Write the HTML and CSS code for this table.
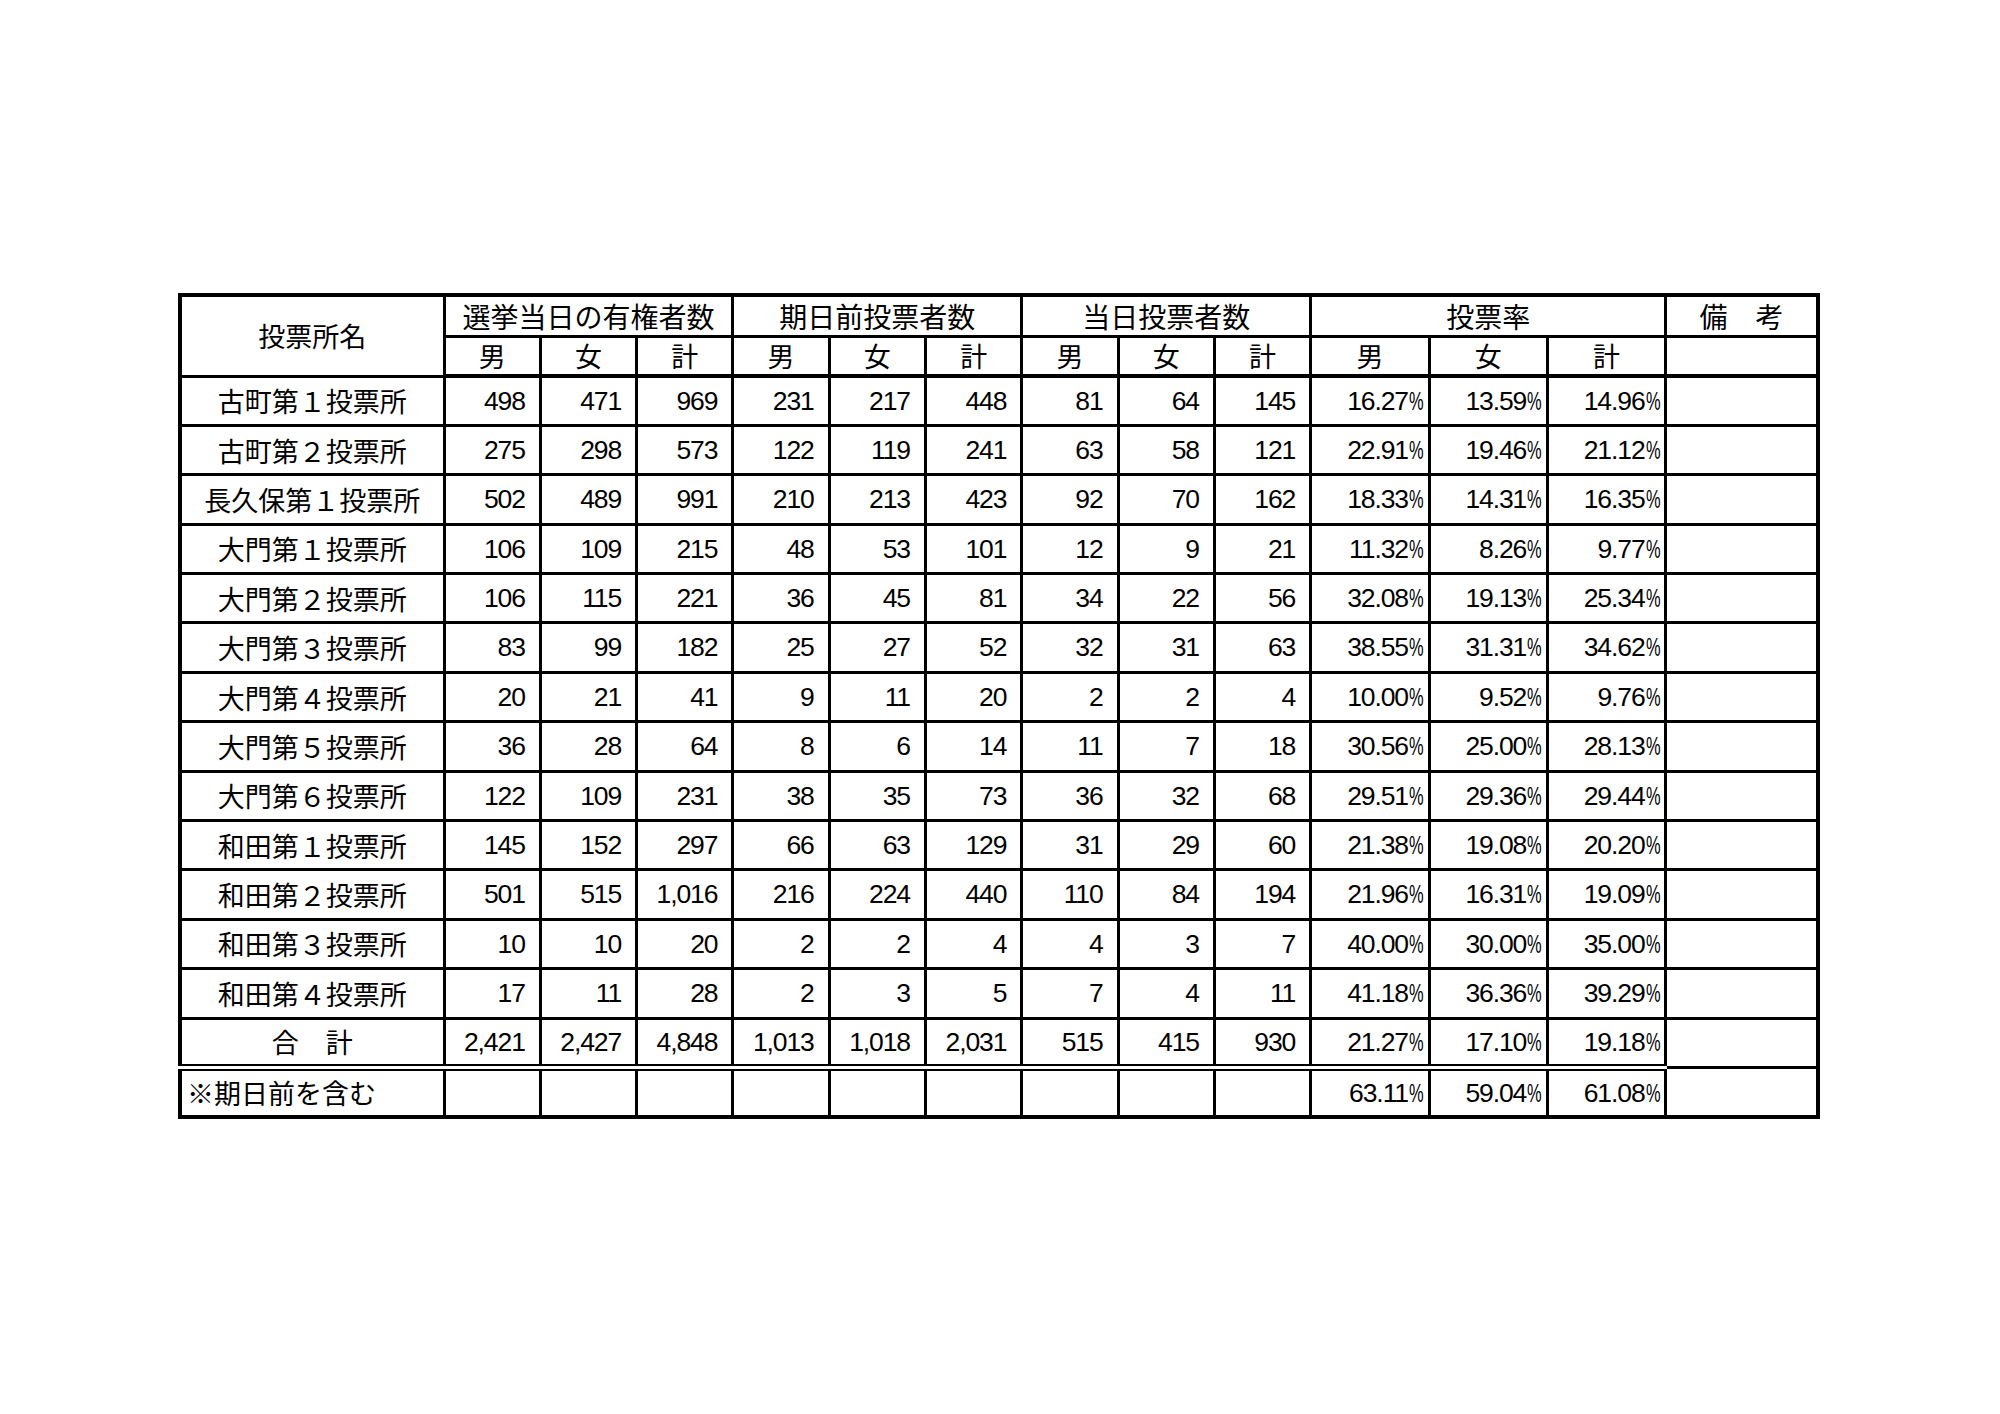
FILE: index.html
```html
<!DOCTYPE html>
<html lang="ja">
<head>
<meta charset="utf-8">
<title>投票率</title>
<link rel="stylesheet" href="styles.css">
</head>
<body>
<div class="page">
<table class="vote">
  <colgroup>
    <col class="c-name">
    <col class="c-num"><col class="c-num"><col class="c-num">
    <col class="c-num"><col class="c-num"><col class="c-num">
    <col class="c-num"><col class="c-num"><col class="c-num">
    <col class="c-rate"><col class="c-rate"><col class="c-rate">
    <col class="c-note">
  </colgroup>
  <thead>
    <tr class="h1">
      <th rowspan="2" class="hname">投票所名</th>
      <th colspan="3" class="grp">選挙当日の有権者数</th>
      <th colspan="3" class="grp">期日前投票者数</th>
      <th colspan="3" class="grp">当日投票者数</th>
      <th colspan="3" class="grp">投票率</th>
      <th class="grp">備　考</th>
    </tr>
    <tr class="h2">
      <th>男</th><th>女</th><th>計</th>
      <th>男</th><th>女</th><th>計</th>
      <th>男</th><th>女</th><th>計</th>
      <th>男</th><th>女</th><th>計</th>
      <th></th>
    </tr>
  </thead>
  <tbody>
    <tr><td class="name">古町第１投票所</td><td class="n">498</td><td class="n">471</td><td class="n">969</td><td class="n">231</td><td class="n">217</td><td class="n">448</td><td class="n">81</td><td class="n">64</td><td class="n">145</td><td class="p">16.27<span class="pc">%</span></td><td class="p">13.59<span class="pc">%</span></td><td class="p">14.96<span class="pc">%</span></td><td></td></tr>
    <tr><td class="name">古町第２投票所</td><td class="n">275</td><td class="n">298</td><td class="n">573</td><td class="n">122</td><td class="n">119</td><td class="n">241</td><td class="n">63</td><td class="n">58</td><td class="n">121</td><td class="p">22.91<span class="pc">%</span></td><td class="p">19.46<span class="pc">%</span></td><td class="p">21.12<span class="pc">%</span></td><td></td></tr>
    <tr><td class="name">長久保第１投票所</td><td class="n">502</td><td class="n">489</td><td class="n">991</td><td class="n">210</td><td class="n">213</td><td class="n">423</td><td class="n">92</td><td class="n">70</td><td class="n">162</td><td class="p">18.33<span class="pc">%</span></td><td class="p">14.31<span class="pc">%</span></td><td class="p">16.35<span class="pc">%</span></td><td></td></tr>
    <tr><td class="name">大門第１投票所</td><td class="n">106</td><td class="n">109</td><td class="n">215</td><td class="n">48</td><td class="n">53</td><td class="n">101</td><td class="n">12</td><td class="n">9</td><td class="n">21</td><td class="p">11.32<span class="pc">%</span></td><td class="p">8.26<span class="pc">%</span></td><td class="p">9.77<span class="pc">%</span></td><td></td></tr>
    <tr><td class="name">大門第２投票所</td><td class="n">106</td><td class="n">115</td><td class="n">221</td><td class="n">36</td><td class="n">45</td><td class="n">81</td><td class="n">34</td><td class="n">22</td><td class="n">56</td><td class="p">32.08<span class="pc">%</span></td><td class="p">19.13<span class="pc">%</span></td><td class="p">25.34<span class="pc">%</span></td><td></td></tr>
    <tr><td class="name">大門第３投票所</td><td class="n">83</td><td class="n">99</td><td class="n">182</td><td class="n">25</td><td class="n">27</td><td class="n">52</td><td class="n">32</td><td class="n">31</td><td class="n">63</td><td class="p">38.55<span class="pc">%</span></td><td class="p">31.31<span class="pc">%</span></td><td class="p">34.62<span class="pc">%</span></td><td></td></tr>
    <tr><td class="name">大門第４投票所</td><td class="n">20</td><td class="n">21</td><td class="n">41</td><td class="n">9</td><td class="n">11</td><td class="n">20</td><td class="n">2</td><td class="n">2</td><td class="n">4</td><td class="p">10.00<span class="pc">%</span></td><td class="p">9.52<span class="pc">%</span></td><td class="p">9.76<span class="pc">%</span></td><td></td></tr>
    <tr><td class="name">大門第５投票所</td><td class="n">36</td><td class="n">28</td><td class="n">64</td><td class="n">8</td><td class="n">6</td><td class="n">14</td><td class="n">11</td><td class="n">7</td><td class="n">18</td><td class="p">30.56<span class="pc">%</span></td><td class="p">25.00<span class="pc">%</span></td><td class="p">28.13<span class="pc">%</span></td><td></td></tr>
    <tr><td class="name">大門第６投票所</td><td class="n">122</td><td class="n">109</td><td class="n">231</td><td class="n">38</td><td class="n">35</td><td class="n">73</td><td class="n">36</td><td class="n">32</td><td class="n">68</td><td class="p">29.51<span class="pc">%</span></td><td class="p">29.36<span class="pc">%</span></td><td class="p">29.44<span class="pc">%</span></td><td></td></tr>
    <tr><td class="name">和田第１投票所</td><td class="n">145</td><td class="n">152</td><td class="n">297</td><td class="n">66</td><td class="n">63</td><td class="n">129</td><td class="n">31</td><td class="n">29</td><td class="n">60</td><td class="p">21.38<span class="pc">%</span></td><td class="p">19.08<span class="pc">%</span></td><td class="p">20.20<span class="pc">%</span></td><td></td></tr>
    <tr><td class="name">和田第２投票所</td><td class="n">501</td><td class="n">515</td><td class="n">1,016</td><td class="n">216</td><td class="n">224</td><td class="n">440</td><td class="n">110</td><td class="n">84</td><td class="n">194</td><td class="p">21.96<span class="pc">%</span></td><td class="p">16.31<span class="pc">%</span></td><td class="p">19.09<span class="pc">%</span></td><td></td></tr>
    <tr><td class="name">和田第３投票所</td><td class="n">10</td><td class="n">10</td><td class="n">20</td><td class="n">2</td><td class="n">2</td><td class="n">4</td><td class="n">4</td><td class="n">3</td><td class="n">7</td><td class="p">40.00<span class="pc">%</span></td><td class="p">30.00<span class="pc">%</span></td><td class="p">35.00<span class="pc">%</span></td><td></td></tr>
    <tr><td class="name">和田第４投票所</td><td class="n">17</td><td class="n">11</td><td class="n">28</td><td class="n">2</td><td class="n">3</td><td class="n">5</td><td class="n">7</td><td class="n">4</td><td class="n">11</td><td class="p">41.18<span class="pc">%</span></td><td class="p">36.36<span class="pc">%</span></td><td class="p">39.29<span class="pc">%</span></td><td></td></tr>
    <tr class="total"><td class="name">合　計</td><td class="n">2,421</td><td class="n">2,427</td><td class="n">4,848</td><td class="n">1,013</td><td class="n">1,018</td><td class="n">2,031</td><td class="n">515</td><td class="n">415</td><td class="n">930</td><td class="p">21.27<span class="pc">%</span></td><td class="p">17.10<span class="pc">%</span></td><td class="p">19.18<span class="pc">%</span></td><td class="last"></td></tr>
    <tr class="extra"><td class="note">※期日前を含む</td><td></td><td></td><td></td><td></td><td></td><td></td><td></td><td></td><td></td><td class="p">63.11<span class="pc">%</span></td><td class="p">59.04<span class="pc">%</span></td><td class="p">61.08<span class="pc">%</span></td><td></td></tr>
  </tbody>
</table>
</div>
</body>
</html>
```

FILE: styles.css
```css
html, body {
  margin: 0;
  padding: 0;
  background: #ffffff;
}

body {
  width: 2000px;
  height: 1414px;
  color: #000;
  font-family: "Noto Sans CJK JP", "Noto Sans CJK SC", sans-serif;
}

.page {
  padding: 293px 0 0 178px;
}

.vote {
  border-collapse: collapse;
  table-layout: fixed;
  width: 1640px;
  border: 4px solid #000;
}

.c-name { width: 264px; }
.c-num { width: 96.3px; }
.c-rate { width: 118.3px; }
.c-note { width: 152px; }

.vote th,
.vote td {
  border: 3px solid #000;
  padding: 0;
  line-height: 1;
  white-space: nowrap;
  overflow: hidden;
}

.vote th {
  font-weight: 400;
  text-align: center;
  font-size: 27px;
}

.vote .grp {
  font-size: 28px;
}

.h1 { height: 41px; }
.h2 { height: 40px; }
.vote tbody tr { height: 49.4px; }

.vote thead tr.h2 th { border-bottom-width: 4px; }

.name {
  text-align: center;
  font-size: 27px;
}

.note {
  text-align: left;
  font-size: 27px;
  padding-left: 5px !important;
}

.n,
.p {
  text-align: right;
  font-family: "Liberation Sans", Arial, sans-serif;
  font-size: 26.5px;
  letter-spacing: -1.1px;
}

.n { padding-right: 14px !important; }
.p { padding-right: 4px !important; }

.pc {
  display: inline-block;
  transform: scaleX(0.62);
  transform-origin: right center;
  margin-left: -8px;
  letter-spacing: 0;
}

.total td { border-bottom: 7px double #000; }
.total td.last { border-bottom: 3px solid #000; }
```
